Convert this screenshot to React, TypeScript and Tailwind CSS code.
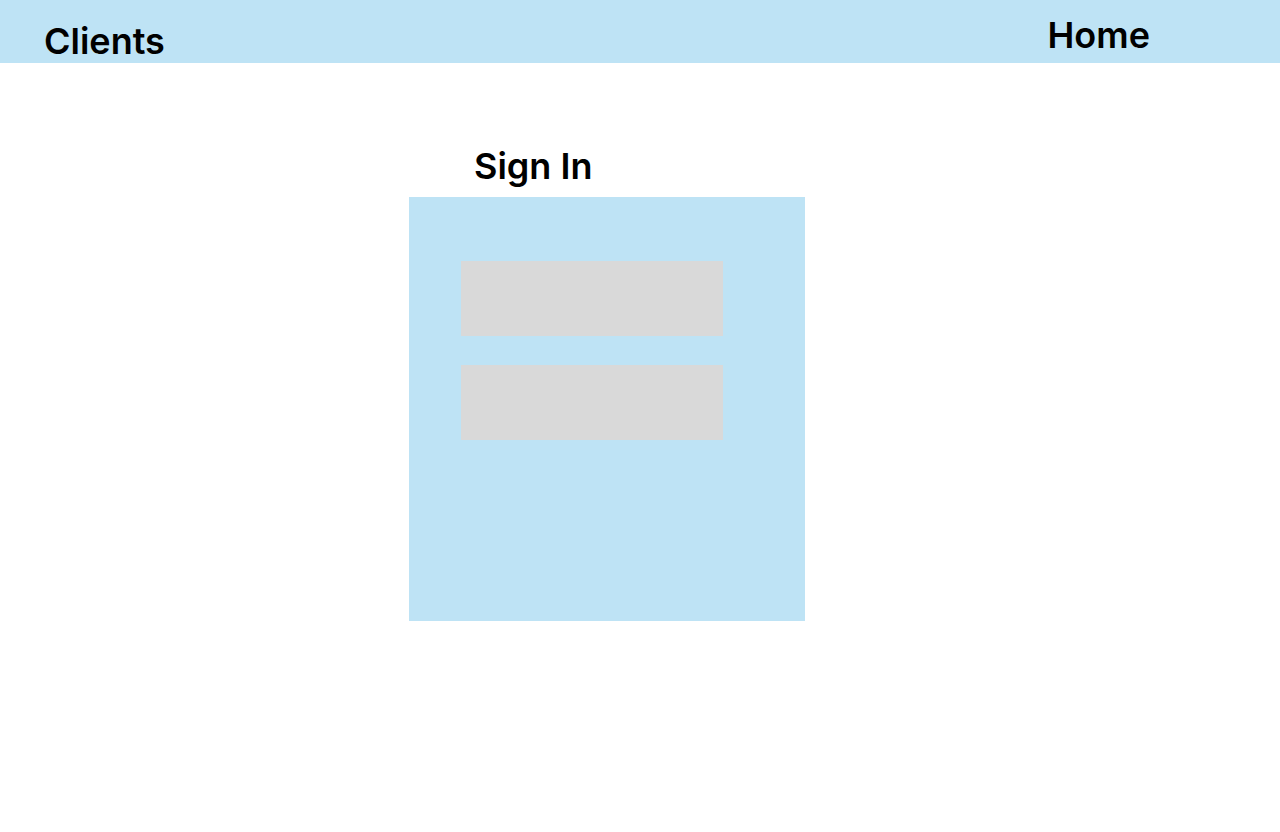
import React from "react";

export default function App() {
  return (
    <div className="min-h-[832px] w-[1280px] bg-white" style={{ fontFamily: "Inter, 'Noto Sans', sans-serif" }}>
      <header className="flex h-[63px] items-start justify-between bg-[#BEE3F5] pl-[44px] pr-[130px]">
        <h1 className="mt-[23px] text-[36px] font-semibold leading-[36px] text-black">Clients</h1>
        <a className="mt-[17px] text-[36px] font-semibold leading-[36px] text-black">Home</a>
      </header>
      <main className="flex flex-col items-start pl-[409px] pt-[85px]">
        <h2 className="ml-[65px] text-[36px] font-semibold leading-[36px] text-black">Sign In</h2>
        <div className="mt-[13px] flex h-[424px] w-[396px] flex-col gap-[29px] bg-[#BEE3F5] pl-[52px] pt-[64px]">
          <div className="h-[75px] w-[262px] bg-[#D9D9D9]" />
          <div className="h-[75px] w-[262px] bg-[#D9D9D9]" />
        </div>
      </main>
    </div>
  );
}
